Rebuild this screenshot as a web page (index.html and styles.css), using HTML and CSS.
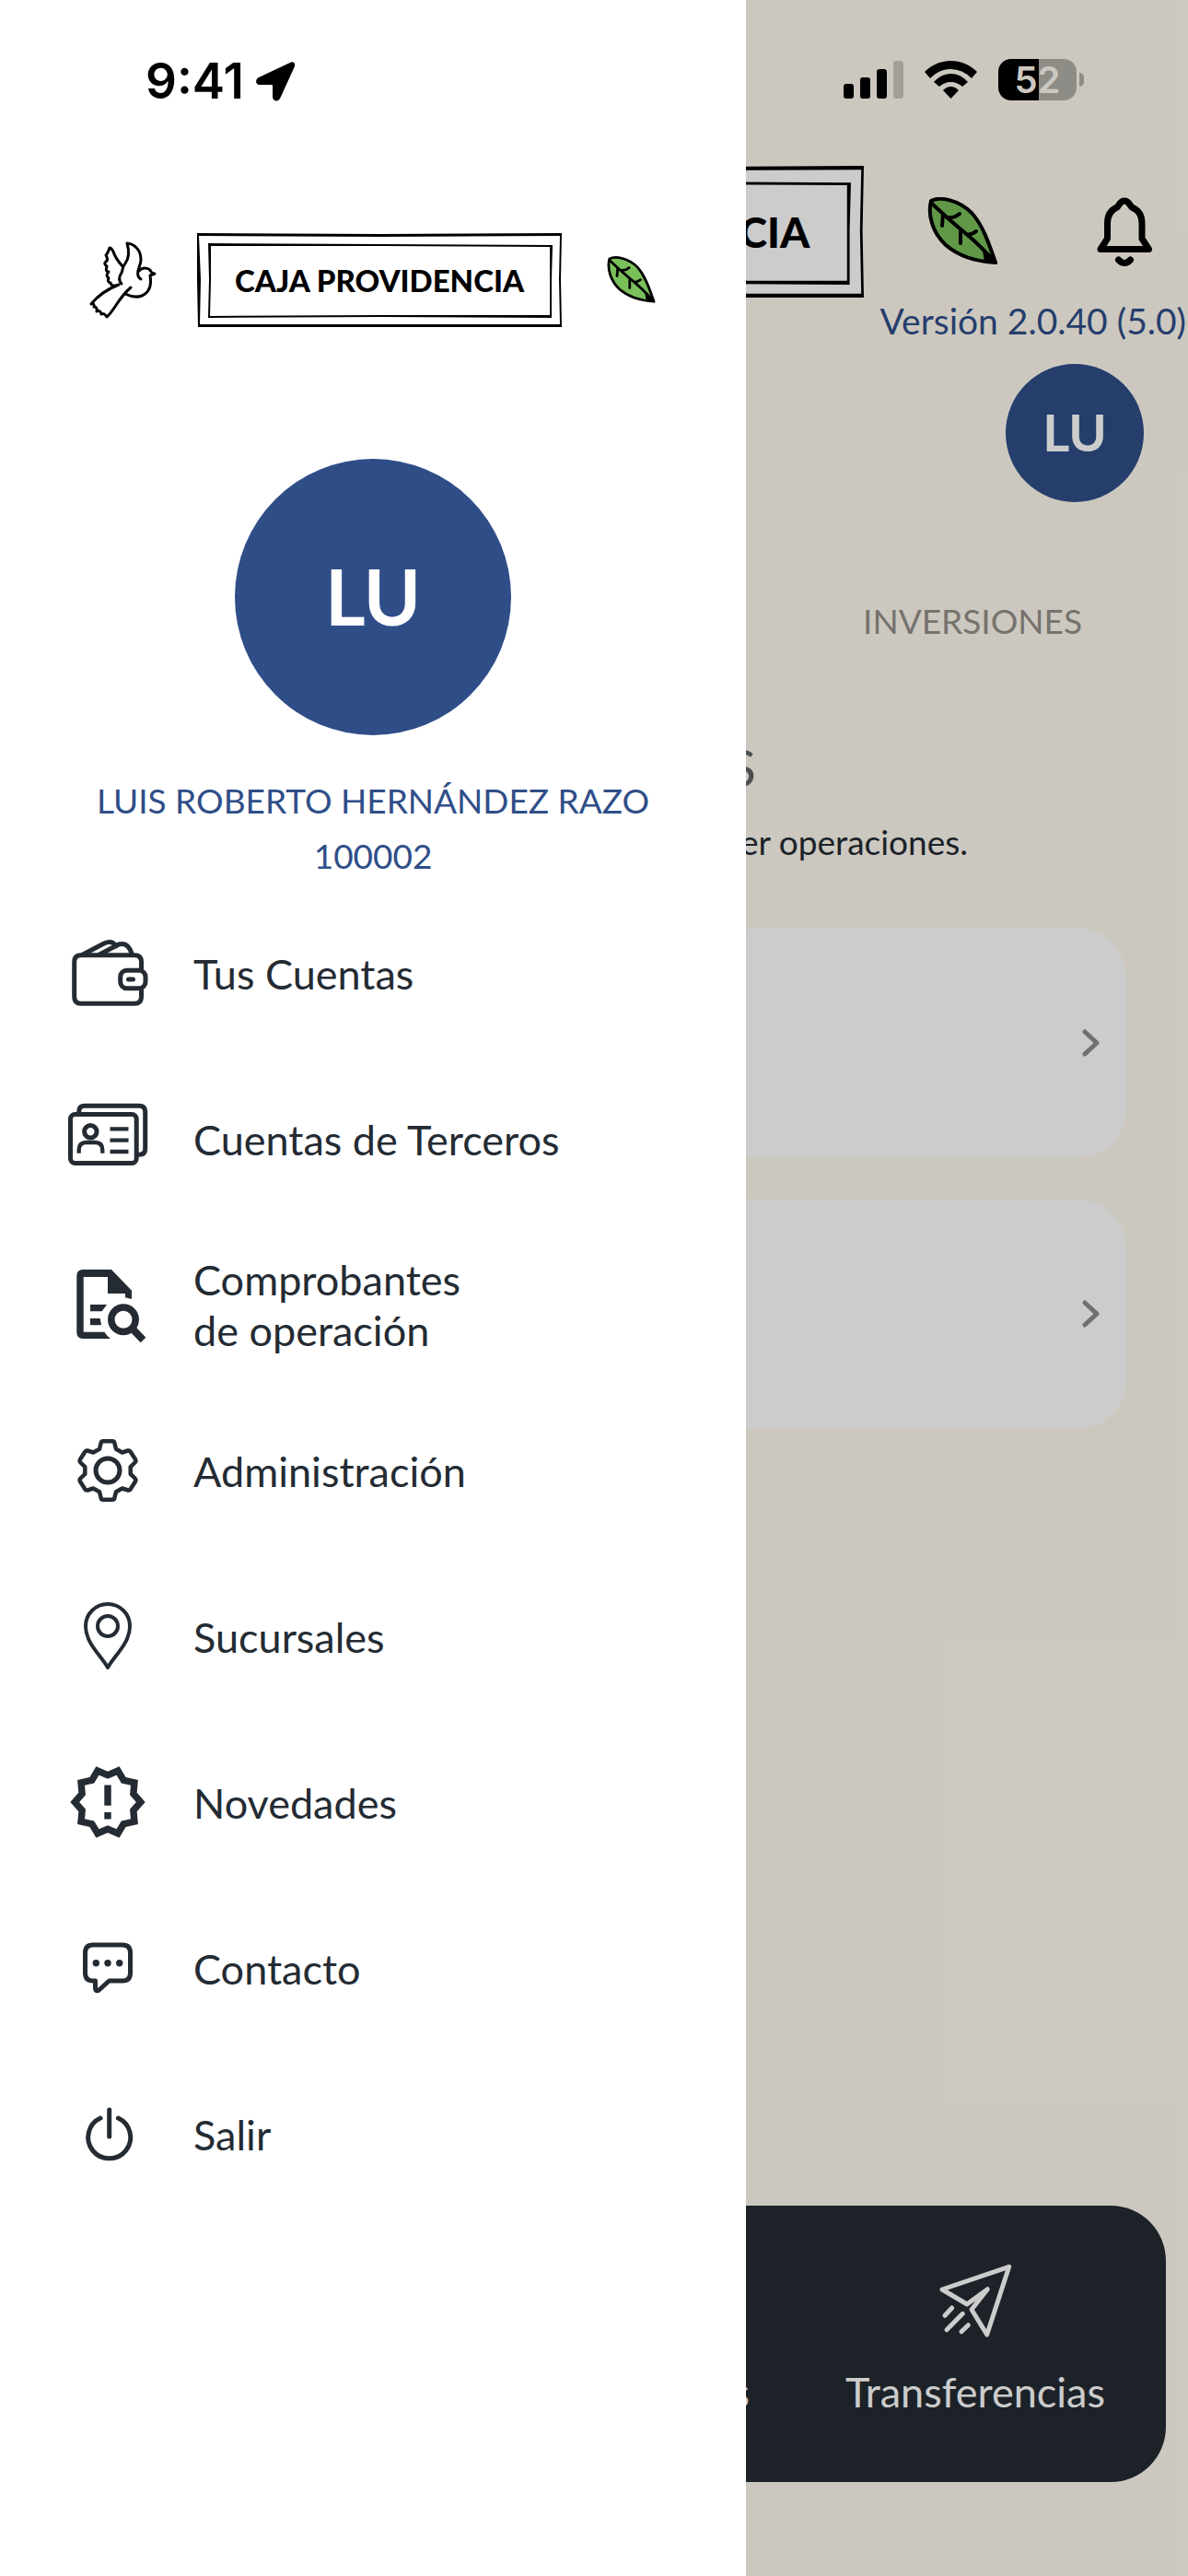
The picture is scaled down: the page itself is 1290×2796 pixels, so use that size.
FILE: index.html
```html
<!DOCTYPE html>
<html lang="es">
<head>
<meta charset="utf-8">
<meta name="viewport" content="width=device-width, initial-scale=1">
<title>Caja Providencia</title>
<link rel="stylesheet" href="styles.css">
</head>
<body>
<svg class="symbols" aria-hidden="true">
  <symbol id="leaf" viewBox="0 0 77 75">
    <path d="M4 4C14-1 34 3 48 17C61 31 68 54 74 71C54 70 34 64 20 52C6 39 0 20 4 4Z" fill="#79bf5a" stroke="#000" stroke-width="4" stroke-linejoin="round"/>
    <path d="M5 7Q24 25 40 38T74 71M17 18L16 31M23 22Q29 23 35 18M36 36V50M42 40Q46 42 53 37" fill="none" stroke="#000" stroke-width="4" stroke-linecap="round"/>
    <path d="M60 58L76 73L62 70Z"/>
  </symbol>
  <symbol id="frame" viewBox="0 0 396 102">
    <path d="M1 1L395 1L393 50L395 100L2 100L3 50Z" fill="#fff"/>
    <path fill-rule="evenodd" d="M0 0L200 1L396 0L395 50L396 102L130 103L1 102L0 50ZM2 3L4 50L3 99L200 99L394 99L393 50L394 3L200 4Z"/>
    <path d="M12 11L200 12L386 13L385 50L385 92L200 91L12 92L13 50ZM15 14L15 50L14 90L200 89L383 89L383 50L383 15L200 14Z" fill-rule="evenodd"/>
  </symbol>
</svg>
<div class="app">
  <main class="screen">
    <div class="indicators">
      <svg width="65" height="42" viewBox="0 0 65 42" aria-hidden="true">
        <rect y="25" width="11" height="16" rx="3"/><rect x="18" y="18" width="11" height="23" rx="3"/><rect x="36" y="9" width="11" height="32" rx="3"/><rect x="54" width="11" height="41" rx="3" opacity=".2"/>
      </svg>
      <svg width="57" height="42" viewBox="0 0 57 42" aria-hidden="true">
        <path d="M28.500 0C39 0 49 4 57 12L51 19Q41 9 28.500 9T6 19L0 12C8 4 18 0 28.500 0ZM28.500 14Q39 14 47 23L41 28Q35 23 28.500 23T16 28L10 23Q18 14 28.500 14ZM28.500 28Q33 28 37 32L28.500 41L20 32Q24 28 28.500 28Z"/>
      </svg>
      <div class="battery"><span class="battery-level">52</span><span class="battery-cap"></span></div>
    </div>
    <header class="topbar">
      <div class="brand brand-large">
        <svg class="brand-frame" aria-hidden="true"><use href="#frame"/></svg>
        <span class="brand-name">CAJA PROVIDENCIA</span>
      </div>
      <svg class="leaf-large" aria-hidden="true"><use href="#leaf"/></svg>
      <button class="bell" type="button" aria-label="Notificaciones">
        <svg width="60" height="76" viewBox="0 0 60 76" fill="none" stroke="#000" stroke-width="7" stroke-linecap="round" stroke-linejoin="round"><path d="M4 56.500L11.500 45V28C11.500 20 15 14 22 11C25 7 26 4 30 4S35 7 38 11C45 14 49 20 49 28V45L56.500 56.500ZM23.500 68Q30 75 36.500 68"/></svg>
      </button>
    </header>
    <p class="version">Versión 2.0.40 (5.0)</p>
    <div class="avatar avatar-small">LU</div>
    <div class="tabs"><a class="tab" href="#inversiones">INVERSIONES</a></div>
    <h1 class="heading">S</h1>
    <p class="hint">cer operaciones.</p>
    <div class="cards">
      <button class="card" type="button" aria-label="Abrir cuenta"><svg width="20" height="30" viewBox="0 0 20 30"><path d="M3 3L16 15L3 27"/></svg></button>
      <button class="card" type="button" aria-label="Abrir cuenta"><svg width="20" height="30" viewBox="0 0 20 30"><path d="M3 3L16 15L3 27"/></svg></button>
    </div>
    <nav class="tabbar">
      <span class="tabbar-item"></span>
      <a class="tabbar-item tabbar-cut" href="#s">s</a>
      <a class="tabbar-item" href="#transferencias">
        <svg width="90" height="90" viewBox="0 0 90 90"><path d="M81.700 8.300L9 33L36 49L58.300 32.700L41 54.700L57.700 82ZM19.700 53L12 61.300M31.300 59.300L14 76.700M37.300 71.700L30 78.700"/></svg>
        Transferencias
      </a>
    </nav>
  </main>
  <div class="scrim"></div>
  <aside class="drawer">
    <div class="clock">
      <span>9:41</span>
      <svg width="43" height="43" viewBox="0 0 43 43" aria-hidden="true"><path d="M37 1L3 17C-1 19-1 25 4 25H17Q18 25 18 26V38C18 43 24 44 26 40L42 5C43 1 40-1 37 1Z"/></svg>
    </div>
    <div class="drawer-brand">
      <svg class="dove" viewBox="0 0 71 82" aria-hidden="true"><path d="M35 26Q27 17 25 10Q23 6 21 6Q19 12 17 14Q20 19 17 21Q14 23 18 26Q16 32 20 32Q16 36 20 39Q18 43 22 44Q23 49 31 46M34 45C30 41 32 36 34 33C36 29 34 27 38 23C43 16 42 8 40 1C49 2 55 9 55 19C55 25 50 31 52 36Q52 38 55 40M53 31C57 27 64 27 66 32Q68 34 70 34L65 36C67 48 63 55 56 58Q48 61 38 56M31 46C18 51 9 57 1 67Q5 66 4 70Q8 70 7 75Q11 73 12 78Q15 76 18 81C27 73 30 61 44 49"/></svg>
      <div class="brand">
        <svg class="brand-frame" aria-hidden="true"><use href="#frame"/></svg>
        <span class="brand-name">CAJA PROVIDENCIA</span>
      </div>
      <svg class="leaf-small" aria-hidden="true"><use href="#leaf"/></svg>
    </div>
    <div class="avatar">LU</div>
    <div class="profile">
      <p>LUIS ROBERTO HERNÁNDEZ RAZO</p>
      <p>100002</p>
    </div>
    <nav class="menu">
      <a href="#cuentas"><svg viewBox="0 0 90 90"><path d="M81.500 41V32Q81.500 24.700 74 24.700H16Q8.700 24.700 8.700 32V70Q8.700 77.300 16 77.300H74Q81.500 77.300 81.500 70V61"/><rect x="58.700" y="41.300" width="27.300" height="19.500" rx="7"/><path d="M67.500 51H72.500M18 24L41 12Q50 8 54 15M36 24L57 13Q67 10 71 23"/></svg>Tus Cuentas</a>
      <a href="#terceros"><svg viewBox="0 0 90 90"><rect x="4.500" y="17.500" width="71.700" height="53" rx="5"/><path d="M13.700 15Q13.700 8.300 20 8.300H79Q85.700 8.300 85.700 15V55Q85.700 61.300 79 61.300"/><circle cx="26.300" cy="36.300" r="6.700"/><path d="M13.700 59.700V56Q13.700 48 22 48H31Q39.300 48 39.300 56V59.700M47.500 33.300H67.500M47.500 45.700H67.500M47.500 58H67.500" stroke-width="4.300" stroke-linecap="butt"/></svg>Cuentas de Terceros</a>
      <a href="#comprobantes"><svg viewBox="0 0 90 90"><g fill="currentColor" stroke="none"><path d="M18 6H49L71 28.700V38L64 36.300V32H45V14H18.700V73.700H41.300Q44 78 48 81H18Q11.300 81 11.300 74V13Q11.300 6 18 6ZM26 44H44L38.700 51.300H26ZM26 59H36.700L38 66.300H26Z"/></g><circle cx="62" cy="60.300" r="13.200" stroke-width="7.500"/><path d="M72 70.500L83.500 82.500" stroke-width="8" stroke-linecap="butt"/></svg>Comprobantes<br>de operación</a>
      <a href="#administracion"><svg viewBox="0 0 90 90"><circle cx="45" cy="44" r="13"/><path transform="translate(45 44)" stroke-width="4.500" d="M-9-23.300L-7.300-30Q-7-31.700-5-31.700H5Q7-31.700 7.300-30L9-23.300L15.700-19.500L22-21.500Q24-22 25.500-19L30-12Q31-10 29.500-8.500L24.700-3.900V3.900L29.500 8.500Q31 10 30 12L25.500 19Q24 22 22 21.500L15.700 19.500L9 23.300L7.300 30Q7 31.700 5 31.700H-5Q-7 31.700-7.300 30L-9 23.300L-15.700 19.500L-22 21.500Q-24 22-25.500 19L-30 12Q-31 10-29.500 8.500L-24.700 3.900V-3.900L-29.500-8.500Q-31-10-30-12L-25.500-19Q-24-22-22-21.500L-15.700-19.500Z"/></svg>Administración</a>
      <a href="#sucursales"><svg viewBox="0 0 90 90" class="thin"><circle cx="45" cy="33" r="11"/><path d="M45 78C38 65 21 52 21 33A24 24 0 0 1 69 33C69 52 52 65 45 78Z"/></svg>Sucursales</a>
      <a href="#novedades"><svg viewBox="0 0 90 90"><path transform="translate(.6 -.4) scale(3.700)" fill="currentColor" stroke="none" fill-rule="evenodd" d="M23 12l-2.440-2.780.340-3.680-3.610-.820-1.890-3.180L12 3 8.600 1.540 6.710 4.720l-3.610.810.340 3.680L1 12l2.440 2.780-.340 3.690 3.610.820 1.890 3.180L12 21l3.400 1.460 1.890-3.180 3.610-.820-.340-3.680L23 12zm-4.510 2.110l.260 2.790-2.740.620-1.430 2.410L12 18.820l-2.580 1.110-1.430-2.410-2.740-.620.260-2.800L3.660 12l1.850-2.120-.260-2.780 2.740-.610 1.430-2.410L12 5.180l2.580-1.110 1.430 2.410 2.740.620-.260 2.790L20.340 12l-1.850 2.110zM11 15h2v2h-2zM11 7h2v6h-2z"/></svg>Novedades</a>
      <a href="#contacto"><svg viewBox="0 0 90 90"><path d="M29 19H61Q69.500 19 69.500 27.500V49.500Q69.500 58 61 58H46.500L35.500 68Q31.500 70 31.500 66V58H29Q20.500 58 20.500 49.500V27.500Q20.500 19 29 19Z"/><g fill="currentColor" stroke="none"><circle cx="32.300" cy="38.700" r="3.700"/><circle cx="45" cy="38.700" r="3.700"/><circle cx="57.700" cy="38.700" r="3.700"/></g></svg>Contacto</a>
      <a href="#salir"><svg viewBox="0 0 90 90"><path d="M46.700 18V47M37 27A23 23 0 1 0 56.400 27"/></svg>Salir</a>
    </nav>
  </aside>
</div>
</body>
</html>
```
FILE: styles.css
```css
* { box-sizing: border-box; }
body {
  margin: 0;
  background: #fffbf0;
  color: #242b33;
  font-family: "Lato", sans-serif;
  font-size: 45px;
}
p, h1 { margin: 0; }
a { color: inherit; text-decoration: none; }
button { border: 0; padding: 0; font: inherit; }
.symbols { position: absolute; width: 0; height: 0; }

.app { position: relative; min-height: 100vh; display: flex; overflow: hidden; }
.scrim { position: absolute; inset: 0; background: rgba(0, 0, 0, .2); }

/* Screen behind the drawer */
.screen { flex: 1; min-width: 0; display: flex; flex-direction: column; }
.indicators { display: flex; justify-content: flex-end; align-items: center; gap: 23px; padding: 64px 121px 0 0; }
.battery {
  position: relative;
  width: 85px;
  height: 45px;
  border-radius: 14px;
  background: linear-gradient(90deg, #000 52%, rgba(0, 0, 0, .3) 52%);
  color: #fffbf0;
  font: 600 40px/45px "Inter", sans-serif;
  text-align: center;
}
.battery-cap { position: absolute; right: -8px; top: 15px; width: 5px; height: 15px; border-radius: 0 5px 5px 0; background: rgba(0, 0, 0, .3); }

.topbar { display: flex; align-items: center; justify-content: flex-end; height: 143px; margin-top: 71px; padding-right: 39px; }
.brand { display: grid; grid-template: 100% / 100%; place-items: center; width: 396px; height: 102px; color: #000; font: 900 33px/40px "Lato", sans-serif; white-space: nowrap; }
.brand-frame, .brand-name { grid-area: 1 / 1; }
.brand-frame { width: 100%; height: 100%; overflow: visible; }
.brand-large { flex: none; width: 555px; height: 143px; font-size: 46px; }
.leaf-large { width: 77px; height: 75px; margin-left: 69px; }
.bell { display: flex; margin-left: 107px; background: none; }

.version { color: #2f4e88; font-size: 39px; line-height: 50px; text-align: right; padding-right: 2px; white-space: nowrap; }
.avatar {
  display: grid;
  place-items: center;
  align-self: center;
  width: 300px;
  height: 300px;
  padding-bottom: 4px;
  border-radius: 50%;
  background: #2f4e88;
  color: #fff;
  font-weight: 700;
  font-size: 84px;
  flex: none;
}
.avatar-small { align-self: flex-end; width: 150px; height: 150px; margin: 22px 48px 0 0; font-size: 56px; }
.tabs { display: flex; justify-content: flex-end; margin-top: 104px; padding-right: 115px; }
.tab { color: #94908a; font-size: 37px; line-height: 50px; }
.heading { margin-top: 98px; padding-right: 469px; color: #5f6264; font-size: 57px; font-weight: 400; line-height: 70px; text-align: right; }
.hint { margin-top: 22px; padding-right: 239px; font-size: 37px; line-height: 50px; text-align: right; }
.cards { display: grid; gap: 46px; margin-top: 69px; padding: 0 67px; }
.card { display: flex; justify-content: flex-end; align-items: center; height: 248px; padding-right: 28px; border-radius: 52px; background: #fff; }
.card svg { fill: none; stroke: #8c8c8c; stroke-width: 5; stroke-linecap: round; stroke-linejoin: round; }
.tabbar { display: grid; grid-template-columns: repeat(3, 1fr); height: 300px; margin: auto 24px 102px; border-radius: 60px; background: #242b33; color: #fff; }
.tabbar-item { display: flex; flex-direction: column; align-items: center; justify-content: flex-end; gap: 26px; padding-bottom: 70px; line-height: 56px; }
.tabbar-item svg { fill: none; stroke: currentColor; stroke-width: 5; stroke-linecap: round; stroke-linejoin: round; }
.tabbar-cut { align-items: flex-end; padding-right: 38px; }

/* Drawer */
.drawer { position: absolute; inset: 0 auto 0 0; width: 62.8%; display: flex; flex-direction: column; background: #fff; }
.clock { display: flex; align-items: center; gap: 13px; height: 176px; padding-left: 158px; color: #000; font: 600 53px/60px "Inter", sans-serif; }
.drawer-brand { display: flex; align-items: center; justify-content: center; margin-top: 77px; height: 102px; }
.dove { width: 71px; height: 82px; margin-right: 45px; overflow: visible; fill: none; stroke: #000; stroke-width: 3; stroke-linecap: round; stroke-linejoin: round; }
.leaf-small { width: 53px; height: 52px; margin-left: 49px; }
.drawer .avatar { margin-top: 143px; }
.profile { margin-top: 41px; color: #2f4e88; font-size: 37px; line-height: 60px; text-align: center; white-space: nowrap; }
.menu { display: grid; margin-top: 8px; }
.menu a { display: grid; grid-template-columns: 90px 1fr; column-gap: 48px; align-items: center; height: 180px; padding-left: 72px; line-height: 55px; }
.menu svg { width: 90px; height: 90px; fill: none; stroke: currentColor; stroke-width: 5; stroke-linecap: round; stroke-linejoin: round; }
.menu .thin { stroke-width: 4; }
```
